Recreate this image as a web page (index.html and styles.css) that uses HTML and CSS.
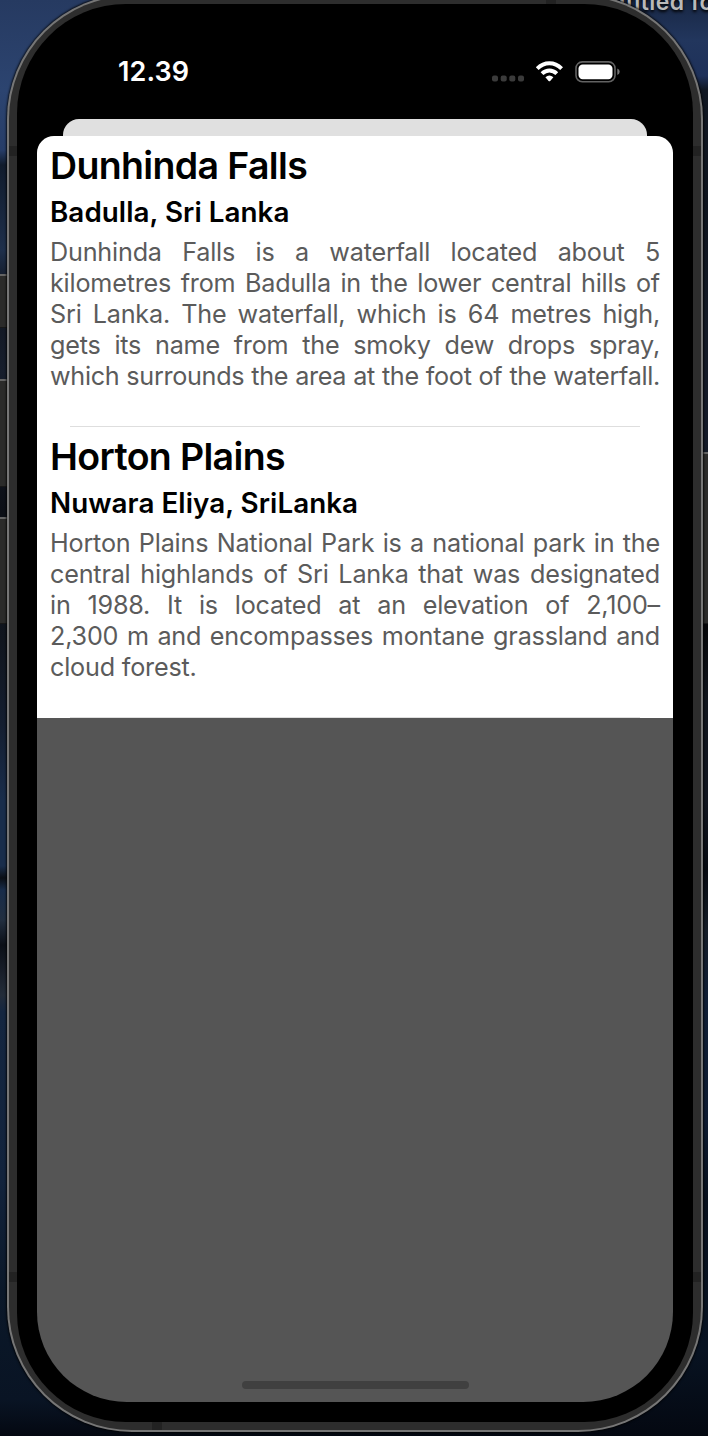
FILE: index.html
```html
<!DOCTYPE html>
<html lang="en">
<head>
<meta charset="utf-8">
<title>Places</title>
<link rel="stylesheet" href="styles.css">
</head>
<body>
<div class="desktop">
  <div class="wall wall-right"></div>
  <div class="folder-label">Untitled fo</div>
  <div class="key key-mute"></div>
  <div class="key key-up"></div>
  <div class="key key-down"></div>
  <div class="key key-power"></div>
  <div class="phone">
    <div class="band">
      <i class="seam seam-left-top"></i><i class="seam seam-right-top"></i>
      <i class="seam seam-left-bottom"></i><i class="seam seam-right-bottom"></i>
      <i class="seam seam-top"></i><i class="seam seam-bottom"></i>
      <div class="bezel">
        <div class="screen">
          <header class="status">
            <span class="time">12.39</span>
            <svg class="status-icons" width="132" height="28" viewBox="0 0 132 28">
              <g fill="#3b3b3b"><rect x="3" y="17.5" width="6" height="6" rx="2"/><rect x="11.7" y="17.5" width="6" height="6" rx="2"/><rect x="20.3" y="17.5" width="6" height="6" rx="2"/><rect x="29" y="17.5" width="6" height="6" rx="2"/></g>
              <g fill="none" stroke="#fff" stroke-width="4">
                <path d="M48.2 10.6C55.4 3.6 65.4 3.6 72.6 10.6"/>
                <path d="M53 15.6C57.4 11.4 63.4 11.4 67.8 15.6"/>
              </g>
              <path d="M56.4 19.2Q60.4 16 64.4 19.2L61.2 22.9Q60.4 23.7 59.6 22.9Z" fill="#fff"/>
              <rect x="87" y="3.9" width="39" height="19.8" rx="6.3" fill="none" stroke="#626262" stroke-width="1.6"/>
              <rect x="89.5" y="6.4" width="34" height="14.8" rx="4.2" fill="#fff"/>
              <path d="M128.3 10.6Q130.7 11.6 130.7 13.8T128.3 17Z" fill="#747474"/>
            </svg>
          </header>
          <div class="back-sheet"></div>
          <main class="sheet">
            <article class="place">
              <h2 class="title">Dunhinda Falls</h2>
              <h3 class="region">Badulla, Sri Lanka</h3>
              <p class="text">
                <span>Dunhinda Falls is a waterfall located about 5</span>
                <span>kilometres from Badulla in the lower central hills of</span>
                <span>Sri Lanka. The waterfall, which is 64 metres high,</span>
                <span>gets its name from the smoky dew drops spray,</span>
                <span class="tight">which surrounds the area at the foot of the waterfall.</span>
              </p>
            </article>
            <article class="place">
              <h2 class="title">Horton Plains</h2>
              <h3 class="region">Nuwara Eliya, SriLanka</h3>
              <p class="text">
                <span>Horton Plains National Park is a national park in the</span>
                <span>central highlands of Sri Lanka that was designated</span>
                <span>in 1988. It is located at an elevation of 2,100–</span>
                <span>2,300 m and encompasses montane grassland and</span>
                <span class="last">cloud forest.</span>
              </p>
            </article>
          </main>
          <div class="empty"><div class="home"></div></div>
        </div>
      </div>
    </div>
  </div>
</div>
</body>
</html>
```
FILE: styles.css
```css
* { box-sizing: border-box; }
body { margin: 0; font-family: Inter, "Liberation Sans", sans-serif; }
.desktop {
  position: relative;
  width: 708px;
  height: 1436px;
  overflow: hidden;
  background: linear-gradient(#263a61 0, #2c4470 90px, #273d68 150px, #101b2c 165px, #1e2f4b 250px, #10151f 290px, #171e2c 370px, #0c0f16 510px, #10151e 640px, #141e30 725px, #192d4b 800px, #192d4b 866px, #0a0e15 878px, #182c4a 890px, #222f40 920px, #0b0f17 945px, #232c39 995px, #142640 1012px, #12233c 1180px, #0b1829 1290px, #091424 1400px, #040811 1436px);
}
.wall { position: absolute; }
.wall-right {
  left: 354px; top: 0; width: 354px; height: 1436px;
  background: linear-gradient(#182744 0, #22365d 40px, #1e315a 76px, #101722 90px, #0d131d 200px, #131a26 330px, #131a28 440px, #050608 624px, #10151d 700px, #10151f 800px, #060a11 870px, #141c27 930px, #0f1e35 1000px, #0d1b31 1120px, #07101d 1200px, #081322 1350px, #040811 1436px);
}
.folder-label {
  position: absolute; left: 594px; top: -12px;
  font-size: 23px; line-height: 28px; font-weight: 600; letter-spacing: .4px;
  color: #b9b9b9; white-space: nowrap; text-shadow: 0 2px 3px #000;
}
.key { position: absolute; width: 12px; background: #2b2b2a; border-top: 2px solid #646464; border-bottom: 1px solid #171717; border-radius: 3px; }
.key-mute { left: -2px; top: 274px; height: 54px; }
.key-up { left: -2px; top: 379px; height: 108px; }
.key-down { left: -2px; top: 517px; height: 107px; }
.key-power { left: 698px; top: 452px; height: 172px; }

.phone {
  position: relative;
  width: 696px; height: 1438px;
  margin: -6px 0 0 7px;
  padding: 2px;
  border-radius: 125px;
  background: #767676;
  box-shadow: 0 0 2px 1px rgba(0,0,0,.75);
}
.band { position: relative; height: 1434px; padding: 8px; border-radius: 123px; background: #2d2d2d; overflow: hidden; }
.seam { position: absolute; background: #222; }
.seam-left-top, .seam-left-bottom { left: 0; width: 8px; height: 10px; }
.seam-right-top, .seam-right-bottom { right: 0; width: 8px; height: 10px; }
.seam-left-top, .seam-right-top { top: 150px; }
.seam-left-bottom, .seam-right-bottom { top: 1276px; }
.seam-top { left: 537px; top: 0; width: 10px; height: 8px; }
.seam-bottom { left: 143px; bottom: 0; width: 10px; height: 8px; }
.bezel { position: relative; height: 1418px; padding: 20px; border-radius: 109px; background: #000; }
.screen { height: 1378px; border-radius: 90px; overflow: hidden; display: flex; flex-direction: column; }

.status { height: 95px; display: flex; align-items: flex-start; justify-content: space-between; padding: 33px 52px 0 81px; flex: none; }
.time { color: #fff; font-size: 27px; line-height: 30px; font-weight: 600; letter-spacing: .1px; }
.status-icons { display: block; margin-top: 0.5px; }
.back-sheet { height: 17px; margin: 0 26px; border-radius: 16px 16px 0 0; background: #e0e0e0; flex: none; }
.sheet { background: #fff; border-radius: 17px 17px 0 0; flex: none; }
.place { height: 291px; padding: 9px 13px 0; background: linear-gradient(#dedede, #dedede) 33px 100% / 570px 1px no-repeat; }
.title, .region, .text { margin: 0; }
.title { font-size: 37.5px; line-height: 42px; font-weight: 600; letter-spacing: -.65px; white-space: nowrap; }
.region { margin-top: 8px; font-size: 27.8px; line-height: 34px; font-weight: 600; letter-spacing: .05px; white-space: nowrap; }
.text { margin-top: 8px; color: #5b5b5b; font-size: 25.2px; letter-spacing: -.2px; }
.text span { display: block; height: 30.9px; line-height: 30.9px; white-space: nowrap; text-align: justify; text-align-last: justify; }
.text .tight { letter-spacing: -.31px; }
.text .last { text-align-last: left; }
.empty { flex: 1; background: #555; display: flex; align-items: flex-end; justify-content: center; padding-bottom: 13px; }
.home { width: 227px; height: 8px; border-radius: 4px; background: #404040; }
```
